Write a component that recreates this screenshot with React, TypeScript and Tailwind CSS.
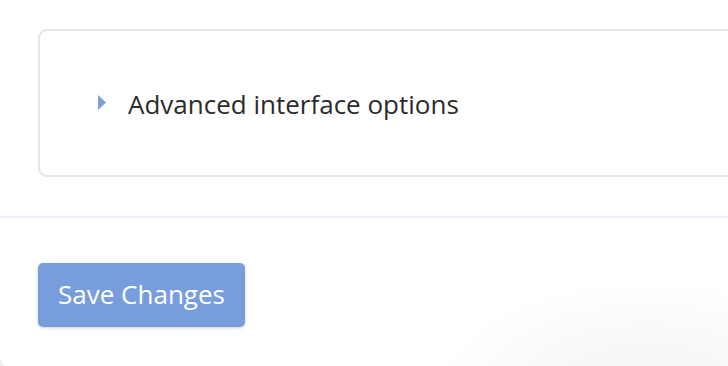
import React from "react";

export default function App() {
  return (
    <div className="relative w-[728px] h-[366px] overflow-hidden bg-[#eeeeee]" style={{ fontFamily: '"Open Sans", "Noto Sans", sans-serif' }}>
      <div className="relative h-[368px] bg-white rounded-bl-[12px] flex flex-col">
        <div className="pt-[29px] pl-[38px]">
          <div className="h-[148px] w-[720px] rounded-[9px] border-2 border-[#e4e4e4] flex items-center pl-[58px]">
            <svg width="8" height="15" viewBox="0 0 8 15" className="shrink-0 mb-[2px]">
              <path d="M0 0 L8 7.5 L0 15 Z" fill="#7a9ede" />
            </svg>
            <span className="ml-[22px] text-[26px] leading-none text-[#2b2b2b] mt-[2px]">Advanced interface options</span>
          </div>
        </div>
        <div className="mt-[39px] h-[2px] bg-[#eef0fb]" />
        <div className="pl-[38px] pt-[45px]">
          <button className="h-[64px] w-[207px] rounded-[5px] bg-[#789ddd] text-white text-[26px] leading-none shadow-[0_1px_3px_rgba(0,0,0,0.18)] pb-[2px]">
            Save Changes
          </button>
        </div>
        <div className="pointer-events-none absolute right-[-140px] bottom-[-150px] w-[440px] h-[240px] rounded-full bg-[radial-gradient(closest-side,rgba(0,0,0,0.05),rgba(0,0,0,0))]" />
      </div>
    </div>
  );
}
